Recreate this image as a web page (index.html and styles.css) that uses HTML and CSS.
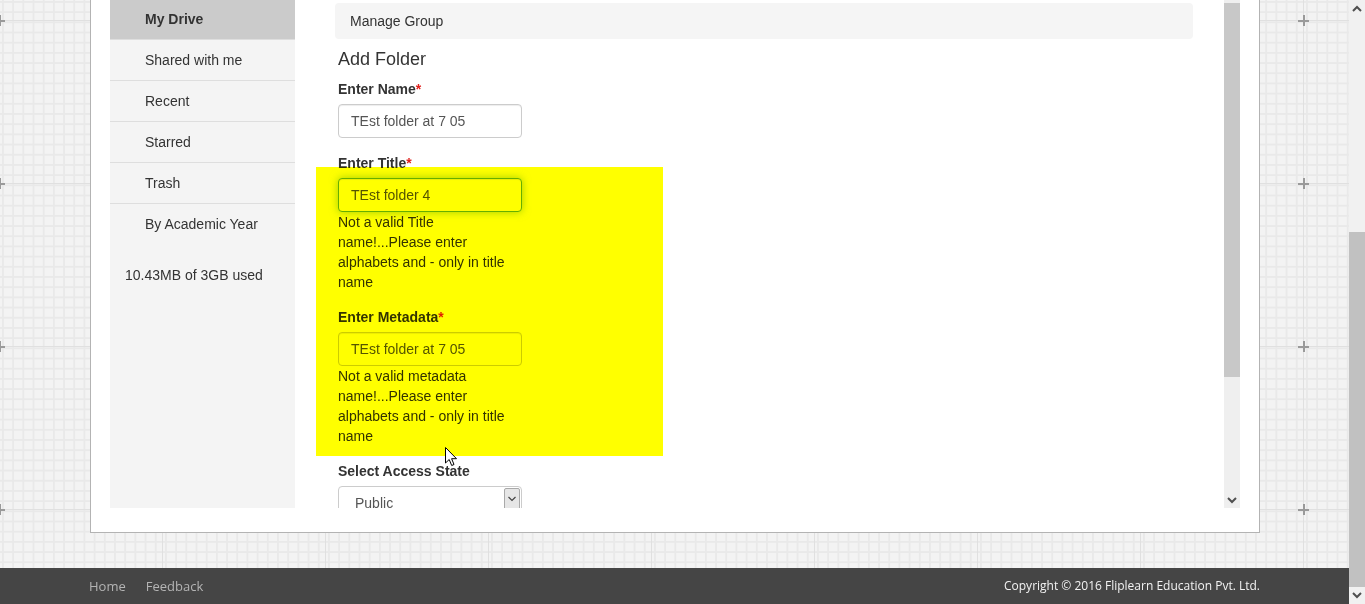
FILE: index.html
```html
<!DOCTYPE html>
<html lang="en">
<head>
<meta charset="utf-8">
<title>My Drive - Add Folder</title>
<link rel="stylesheet" href="styles.css">
</head>
<body>
<div class="viewport">
  <div class="page">
    <span class="mark xl y1"></span><span class="mark xl y2"></span><span class="mark xl y3"></span><span class="mark xl y4"></span>
    <span class="mark xr y1"></span><span class="mark xr y2"></span><span class="mark xr y3"></span><span class="mark xr y4"></span>

    <div class="container">
      <div class="row">
        <aside class="sidebar">
          <ul class="nav">
            <li class="active">My Drive</li>
            <li>Shared with me</li>
            <li>Recent</li>
            <li>Starred</li>
            <li>Trash</li>
            <li class="last">By Academic Year</li>
          </ul>
          <p class="usage">10.43MB of 3GB used</p>
        </aside>

        <section class="main">
          <div class="main-body">
            <div class="bar">Manage Group</div>
            <div class="form-wrap">
              <h4>Add Folder</h4>
              <div class="form-group">
                <label>Enter Name<span class="req">*</span></label>
                <div class="form-control">TEst folder at 7 05</div>
              </div>
              <div class="form-group">
                <label>Enter Title<span class="req">*</span></label>
                <div class="form-control focus">TEst folder 4</div>
                <p class="error">Not a valid Title name!...Please enter alphabets and - only in title name</p>
              </div>
              <div class="form-group">
                <label>Enter Metadata<span class="req">*</span></label>
                <div class="form-control">TEst folder at 7 05</div>
                <p class="error">Not a valid metadata name!...Please enter alphabets and - only in title name</p>
              </div>
              <div class="form-group">
                <label>Select Access State</label>
                <div class="select">
                  <span>Public</span>
                  <span class="select-btn">
                    <svg width="14" height="18" viewBox="0 0 14 18"><path d="M3.5 8 L7 11.5 L10.5 8" fill="none" stroke="#444" stroke-width="1.2"/></svg>
                  </span>
                </div>
              </div>
            </div>
            <div class="highlight"></div>
            <svg class="cursor" width="13" height="20" viewBox="0 0 13 20">
              <path d="M0.5 0.5 L0.5 16 L4.2 12.5 L6.7 18.5 L9 17.5 L6.6 11.7 L11.5 11.7 Z" fill="#fff" stroke="#000" stroke-width="1" stroke-linejoin="round"/>
            </svg>
          </div>
          <div class="vscroll">
            <div class="vthumb"></div>
            <div class="vdown">
              <svg width="16" height="16" viewBox="0 0 16 16"><path d="M4 6 L8 10 L12 6" fill="none" stroke="#505050" stroke-width="2"/></svg>
            </div>
          </div>
        </section>
      </div>
    </div>

    <footer class="footer">
      <div class="footer-inner">
        <nav class="footer-links"><a>Home</a><a>Feedback</a></nav>
        <span class="copy">Copyright © 2016 Fliplearn Education Pvt. Ltd.</span>
      </div>
    </footer>
  </div>

  <div class="page-scroll">
    <div class="ps-btn">
      <svg width="16" height="17" viewBox="0 0 16 17"><path d="M4 11 L8 7 L12 11" fill="none" stroke="#505050" stroke-width="2"/></svg>
    </div>
    <div class="ps-track"><div class="ps-thumb"></div></div>
    <div class="ps-btn">
      <svg width="16" height="17" viewBox="0 0 16 17"><path d="M4 6 L8 10 L12 6" fill="none" stroke="#505050" stroke-width="2"/></svg>
    </div>
  </div>
</div>
</body>
</html>
```

FILE: styles.css
```css
* { box-sizing: border-box; }
html, body { margin: 0; padding: 0; }
body {
  font-family: "Liberation Sans", Arial, sans-serif;
  font-size: 14px;
  line-height: 20px;
  color: #333;
  overflow: hidden;
}
.viewport {
  display: flex;
  width: 1365px;
  height: 604px;
}
.page {
  position: relative;
  width: 1349px;
  height: 604px;
  overflow: hidden;
  display: flex;
  flex-direction: column;
  background-color: #f3f3f3;
  background-image:
    linear-gradient(to right, #e0e0e0 1px, transparent 1px),
    linear-gradient(to bottom, #e0e0e0 1px, transparent 1px),
    linear-gradient(to right, #e9e9e9 2px, transparent 2px),
    linear-gradient(to bottom, #e9e9e9 2px, transparent 2px);
  background-size: 163px 163px, 163px 163px, 10.1875px 10.1875px, 10.1875px 10.1875px;
  background-position: 162px 20px, 162px 20px, 2px 1px, 2px 1px;
}

/* plus markers on the grid canvas */
.mark {
  position: absolute;
  width: 11px;
  height: 11px;
}
.mark::before, .mark::after {
  content: "";
  position: absolute;
  background: #9a9a9a;
}
.mark::before { left: 0; top: 5px; width: 11px; height: 2px; }
.mark::after { left: 5px; top: 0; width: 2px; height: 11px; }
.xl { left: -6px; }
.xr { left: 1298px; }
.y1 { top: 15px; }
.y2 { top: 178px; }
.y3 { top: 341px; }
.y4 { top: 504px; }

/* main white container */
.container {
  position: relative;
  width: 1170px;
  margin-left: 90px;
  background: #fff;
  border: 1px solid #b3b3b3;
  border-top: none;
  padding: 0 19px 24px 19px;
  flex: none;
}
.row {
  display: flex;
  height: 508px;
}

/* sidebar */
.sidebar {
  width: 185px;
  flex: none;
  background: #f4f4f4;
}
.nav {
  list-style: none;
  margin: -1px 0 0;
  padding: 0;
}
.nav li {
  height: 41px;
  line-height: 40px;
  padding-left: 35px;
  border-bottom: 1px solid #dedede;
  color: #333;
}
.nav li.active {
  background: #cbcbcb;
  font-weight: bold;
}
.nav li.last { border-bottom: none; }
.usage {
  margin: 20px 0 0;
  padding-left: 15px;
  line-height: 20px;
  color: #333;
}

/* main column */
.main {
  flex: 1;
  display: flex;
  min-width: 0;
  overflow: hidden;
}
.main-body {
  position: relative;
  flex: 1;
  padding: 3px 31px 0 40px;
  overflow: hidden;
}
.bar {
  height: 36px;
  line-height: 36px;
  background: #f5f5f5;
  border-radius: 4px;
  padding-left: 15px;
  color: #333;
}
.form-wrap { padding-left: 3px; }
h4 {
  font-size: 18px;
  font-weight: normal;
  line-height: 20px;
  margin: 10px 0;
  color: #333;
}
.form-group {
  width: 184px;
  margin-bottom: 15px;
}
label {
  display: block;
  font-weight: bold;
  margin-bottom: 5px;
  line-height: 20px;
  color: #333;
}
.req { color: #e0201c; }
.form-control {
  height: 34px;
  padding: 6px 12px;
  line-height: 20px;
  color: #555;
  background: #fff;
  border: 1px solid #ccc;
  border-radius: 4px;
  box-shadow: inset 0 1px 1px rgba(0,0,0,.075);
}
.form-control.focus {
  border-color: #66afe9;
  box-shadow: inset 0 1px 1px rgba(0,0,0,.075), 0 0 8px rgba(102,175,233,.6);
}
.error {
  margin: 0;
  line-height: 20px;
  color: #333;
}
.select {
  position: relative;
  height: 34px;
  border: 1px solid #ccc;
  border-radius: 4px;
  padding: 6px 16px;
  color: #555;
  display: flex;
  justify-content: space-between;
}
.select-btn {
  position: absolute;
  right: 1px;
  top: 1px;
  width: 16px;
  height: 30px;
  background: #e6e6e6;
  border: 1px solid #a9a9a9;
  border-radius: 2px;
  display: flex;
  justify-content: center;
}

/* highlighter overlay and cursor */
.highlight {
  position: absolute;
  left: 21px;
  top: 167px;
  width: 347px;
  height: 289px;
  background: #ffff00;
  mix-blend-mode: multiply;
}
.cursor {
  position: absolute;
  left: 150px;
  top: 447px;
}

/* inner scrollbar */
.vscroll {
  width: 16px;
  flex: none;
  background: #efefef;
  display: flex;
  flex-direction: column;
  justify-content: space-between;
  padding-top: 3px;
}
.vthumb {
  height: 374px;
  background: #c8c8c8;
}
.vdown {
  height: 17px;
  display: flex;
  align-items: center;
  justify-content: center;
}

/* footer */
.footer {
  margin-top: auto;
  height: 36px;
  background: #454545;
  font-family: "Open Sans", "Liberation Sans", sans-serif;
}
.footer-inner {
  width: 1171px;
  margin-left: 89px;
  height: 35px;
  display: flex;
  align-items: center;
  justify-content: space-between;
}
.footer-links { display: flex; gap: 20px; font-size: 13px; }
.footer-links a { color: #b4b4b4; }
.copy { color: #f2f2f2; font-size: 12px; }

/* page scrollbar */
.page-scroll {
  width: 16px;
  height: 604px;
  background: #f1f1f1;
  display: flex;
  flex-direction: column;
}
.ps-btn {
  height: 17px;
  flex: none;
  display: flex;
  align-items: center;
  justify-content: center;
}
.ps-track {
  flex: 1;
  padding-top: 215px;
}
.ps-thumb {
  height: 355px;
  background: #c1c1c1;
}
```
